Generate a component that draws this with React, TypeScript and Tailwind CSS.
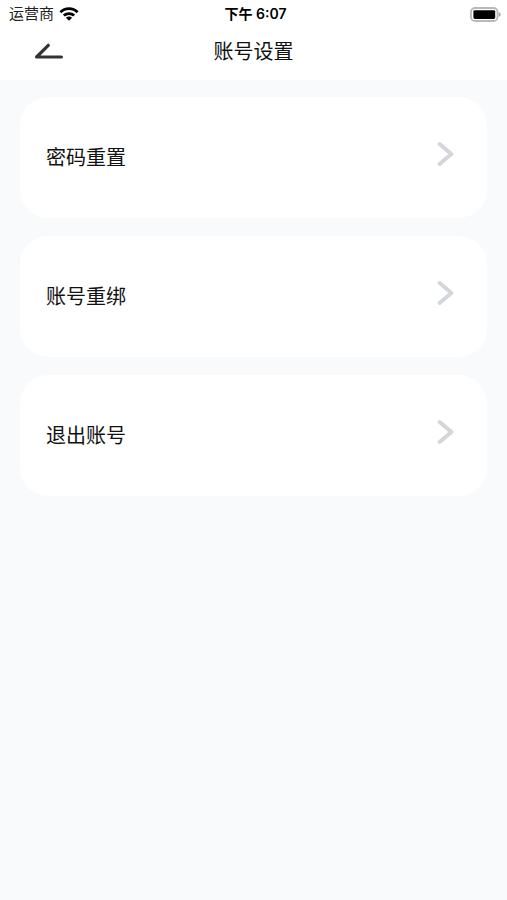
import React from 'react';

const items = ['密码重置', '账号重绑', '退出账号'];

const WifiIcon: React.FC = () => (
  <svg width="20" height="14" viewBox="0 0 20 14" fill="none" stroke="#000" strokeWidth="2.7" aria-hidden="true">
    <path d="M1.4 5.2C6.2 0.5 13.8 0.5 18.6 5.2" />
    <path d="M4.8 8.6C7.7 5.9 12.3 5.9 15.2 8.6" />
    <path d="M10 13.8L6.9 10.8C8.6 9.2 11.4 9.2 13.1 10.8Z" fill="#000" stroke="none" />
  </svg>
);

const BatteryIcon: React.FC = () => (
  <svg width="32" height="15" viewBox="0 0 32 15" aria-hidden="true">
    <rect x="1" y="1" width="26.5" height="13" rx="4" fill="#fff" stroke="#b8b8b8" strokeWidth="1.8" />
    <rect x="3.4" y="3.2" width="21.8" height="8.8" rx="1.4" fill="#000" />
    <path d="M28.6 5C31.4 6.2 31.4 8.8 28.6 10Z" fill="#a8a8a8" />
  </svg>
);

const BackIcon: React.FC = () => (
  <svg width="30" height="18" viewBox="0 0 30 18" fill="none" stroke="#333" strokeWidth="3.2" strokeLinecap="round" strokeLinejoin="round" aria-hidden="true">
    <path d="M14.3 2.3L2.6 14H27.4" />
  </svg>
);

const ChevronIcon: React.FC = () => (
  <svg width="18" height="26" viewBox="0 0 18 26" fill="none" stroke="#d3d6db" strokeWidth="4" strokeLinecap="round" strokeLinejoin="round" aria-hidden="true">
    <path d="M3.6 3L15.4 13L3.6 23" />
  </svg>
);

const App: React.FC = () => {
  return (
    <div className="min-h-screen bg-[#f8fafc] font-['Liberation_Sans','Noto_Sans_CJK_SC',sans-serif] text-black">
      <header className="bg-white">
        <div className="grid h-7 grid-cols-[1fr_auto_1fr] items-center pl-[9px] pr-[5px] text-sm">
          <div className="flex items-center gap-[5px]">
            <span className="text-[15px] text-[#222]">运营商</span>
            <WifiIcon />
          </div>
          <span className="font-['Inter','Noto_Sans_CJK_SC',sans-serif] font-semibold">下午 6:07</span>
          <div className="flex justify-end">
            <BatteryIcon />
          </div>
        </div>
        <div className="grid h-13 grid-cols-[1fr_auto_1fr] items-center px-[34px] pb-1">
          <button type="button" aria-label="返回" className="w-8 cursor-pointer">
            <BackIcon />
          </button>
          <h1 className="text-xl text-[#111]">账号设置</h1>
        </div>
      </header>

      <main className="flex flex-col gap-[18px] px-5 py-[17px]">
        {items.map((item) => (
          <button
            key={item}
            type="button"
            className="flex min-h-[121px] cursor-pointer items-center justify-between rounded-[28px] bg-white pl-[26px] pr-[33px] text-left"
          >
            <span className="text-xl text-[#111]">{item}</span>
            <span className="pb-2">
              <ChevronIcon />
            </span>
          </button>
        ))}
      </main>
    </div>
  );
};

export default App;
